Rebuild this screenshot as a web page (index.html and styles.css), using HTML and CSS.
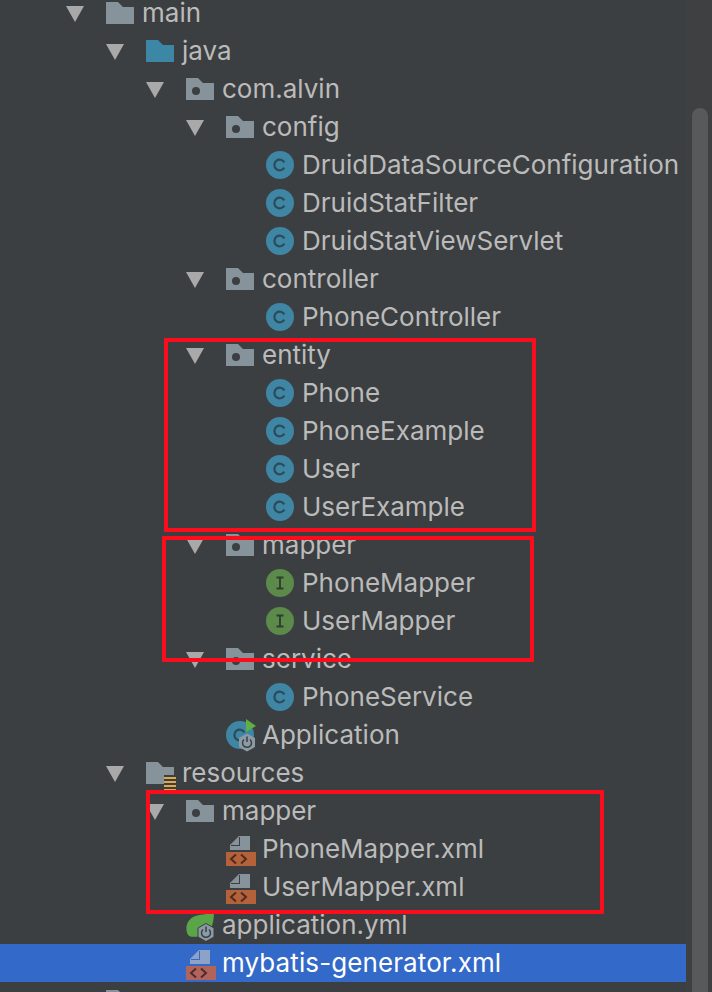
FILE: index.html
```html
<!DOCTYPE html>
<html lang="en">
<head>
<meta charset="utf-8">
<title>Project tree</title>
<link rel="stylesheet" href="styles.css">
</head>
<body>
<svg class="defs" width="0" height="0" aria-hidden="true">
  <symbol id="tri" viewBox="0 0 18 16"><path d="M0 0H18L9 16Z"/></symbol>
  <symbol id="folder" viewBox="0 0 28 22"><path d="M0 0H12L17 5H28V22H0Z"/></symbol>
  <symbol id="pkg" viewBox="0 0 28 22"><path fill="#87939a" d="M0 0H12L17 5H28V22H0Z"/><circle cx="10" cy="13" r="4" fill="#3c3f41"/></symbol>
  <symbol id="cls" viewBox="0 0 28 28"><circle cx="14" cy="14" r="14" fill="#3f86a5"/><path d="M18.300 11.400A5.300 5.300 0 1 0 18.300 16.600" fill="none" stroke="#2b4b5b" stroke-width="2.200"/></symbol>
  <symbol id="ifc" viewBox="0 0 28 28"><circle cx="14" cy="14" r="14" fill="#5b8a4a"/><path d="M10.500 8.500H17.500M14 8.500V19.500M10.500 19.500H17.500" fill="none" stroke="#2f3f2c" stroke-width="1.900"/></symbol>
  <symbol id="xml" viewBox="0 0 30 30"><path fill="#87939a" d="M4 9 13 0H24V14H4Z"/><path fill="#3c3f41" d="M13 1V9H5V10H14V1Z"/><rect y="16" width="30" height="14" fill="#b5613a"/><path d="M10 18.500 5 23 10 27.500M15 18.500 20 23 15 27.500" fill="none" stroke="#4c2c22" stroke-width="2"/></symbol>
  <symbol id="xmlsel" viewBox="0 0 30 30"><path fill="#8da2c4" d="M4 9 13 0H24V14H4Z"/><path fill="#3369c8" d="M13 1V9H5V10H14V1Z"/><rect y="16" width="30" height="14" fill="#b2645a"/><path d="M10 18.500 5 23 10 27.500M15 18.500 20 23 15 27.500" fill="none" stroke="#4c2c32" stroke-width="2"/></symbol>
</svg>

<div class="window">
  <div class="tree">
    <div class="row l0 first"><svg class="tw"><use href="#tri"/></svg><svg class="folder"><use href="#folder"/></svg><span class="name">main</span></div>
    <div class="row l1"><svg class="tw"><use href="#tri"/></svg><svg class="folder src"><use href="#folder"/></svg><span class="name">java</span></div>
    <div class="row l2"><svg class="tw"><use href="#tri"/></svg><svg class="folder"><use href="#pkg"/></svg><span class="name">com.alvin</span></div>
    <div class="row l3"><svg class="tw"><use href="#tri"/></svg><svg class="folder"><use href="#pkg"/></svg><span class="name">config</span></div>
    <div class="row l4 leaf"><svg class="ic"><use href="#cls"/></svg><span class="name">DruidDataSourceConfiguration</span></div>
    <div class="row l4 leaf"><svg class="ic"><use href="#cls"/></svg><span class="name">DruidStatFilter</span></div>
    <div class="row l4 leaf"><svg class="ic"><use href="#cls"/></svg><span class="name">DruidStatViewServlet</span></div>
    <div class="row l3"><svg class="tw"><use href="#tri"/></svg><svg class="folder"><use href="#pkg"/></svg><span class="name">controller</span></div>
    <div class="row l4 leaf"><svg class="ic"><use href="#cls"/></svg><span class="name">PhoneController</span></div>
    <div class="row l3"><svg class="tw"><use href="#tri"/></svg><svg class="folder"><use href="#pkg"/></svg><span class="name">entity</span></div>
    <div class="row l4 leaf"><svg class="ic"><use href="#cls"/></svg><span class="name">Phone</span></div>
    <div class="row l4 leaf"><svg class="ic"><use href="#cls"/></svg><span class="name">PhoneExample</span></div>
    <div class="row l4 leaf"><svg class="ic"><use href="#cls"/></svg><span class="name">User</span></div>
    <div class="row l4 leaf"><svg class="ic"><use href="#cls"/></svg><span class="name">UserExample</span></div>
    <div class="row l3"><svg class="tw"><use href="#tri"/></svg><svg class="folder"><use href="#pkg"/></svg><span class="name">mapper</span></div>
    <div class="row l4 leaf"><svg class="ic"><use href="#ifc"/></svg><span class="name">PhoneMapper</span></div>
    <div class="row l4 leaf"><svg class="ic"><use href="#ifc"/></svg><span class="name">UserMapper</span></div>
    <div class="row l3"><svg class="tw"><use href="#tri"/></svg><svg class="folder"><use href="#pkg"/></svg><span class="name">service</span></div>
    <div class="row l4 leaf"><svg class="ic"><use href="#cls"/></svg><span class="name">PhoneService</span></div>
    <div class="row l3 leaf">
      <svg class="ic" viewBox="0 0 28 28">
        <circle cx="14" cy="14" r="14" fill="#3f86a5"/>
        <path d="M18.300 11.400A5.300 5.300 0 1 0 18.300 16.600" fill="none" stroke="#2b4b5b" stroke-width="2.200"/>
        <path d="M20 -2 30 5 20 11Z" fill="#5fae46"/>
        <path d="M21 12.500 29 17V26L21 30.500 13 26V17Z" fill="#8a9ba6"/>
        <path d="M18 18.500A4.500 4.500 0 1 0 24 18.500M21 15.500V21" fill="none" stroke="#3c3f41" stroke-width="1.500"/>
      </svg>
      <span class="name">Application</span>
    </div>
    <div class="row l1">
      <svg class="tw"><use href="#tri"/></svg>
      <svg class="folder" viewBox="0 0 28 22">
        <path fill="#87939a" d="M0 0H12L17 5H28V13H18V22H0Z"/>
        <path fill="#e0a84c" d="M18 15H30V17H18ZM18 19H30V21H18ZM18 23H30V25H18ZM18 27H30V29H18Z"/>
      </svg>
      <span class="name">resources</span>
    </div>
    <div class="row l2"><svg class="tw"><use href="#tri"/></svg><svg class="folder"><use href="#pkg"/></svg><span class="name">mapper</span></div>
    <div class="row l3 leaf"><svg class="xml"><use href="#xml"/></svg><span class="name">PhoneMapper.xml</span></div>
    <div class="row l3 leaf"><svg class="xml"><use href="#xml"/></svg><span class="name">UserMapper.xml</span></div>
    <div class="row l2 leaf">
      <svg class="ic" viewBox="0 0 28 28">
        <path d="M28 0C28 12 26 22 14 25 8 26.500 4 26 2 24 -1 18 0 10 7 6 13 3 22 4 28 0Z" fill="#5aa548"/>
        <path d="M20 12.500 28 17V26L20 30.500 12 26V17Z" fill="#8a9ba6" stroke="#3c3f41" stroke-width="1"/>
        <path d="M17 18.500A4.500 4.500 0 1 0 23 18.500M20 15.500V21" fill="none" stroke="#3c3f41" stroke-width="1.500"/>
      </svg>
      <span class="name">application.yml</span>
    </div>
    <div class="row l2 leaf selected"><svg class="xml"><use href="#xmlsel"/></svg><span class="name">mybatis-generator.xml</span></div>
    <div class="row l0 tail"><svg class="tw"></svg><svg class="folder"><use href="#folder"/></svg></div>
  </div>
  <div class="gutter"><div class="thumb"></div></div>
  <div class="mark m1"></div>
  <div class="mark m2"></div>
  <div class="mark m3"></div>
</div>
</body>
</html>
```

FILE: styles.css
```css
* { box-sizing: border-box; }
html, body { margin: 0; padding: 0; height: 100%; overflow: hidden; background: #3c3f41; }
.defs { position: absolute; }
.window { position: relative; display: flex; width: 712px; height: 992px; overflow: hidden; font-family: Inter, "Liberation Sans", sans-serif; }
.tree { width: 686px; flex: none; }
.row { display: flex; align-items: center; height: 38px; color: #bbbbbb; font-size: 26px; white-space: nowrap; }
.row.first { height: 26px; margin-bottom: 6px; }
.l0 { padding-left: 66px; }
.l1 { padding-left: 106px; }
.l2 { padding-left: 146px; }
.l3 { padding-left: 186px; }
.l4 { padding-left: 226px; }
.l2.leaf { padding-left: 186px; }
.l3.leaf { padding-left: 226px; }
.l4.leaf { padding-left: 266px; }
.tw { width: 18px; height: 16px; margin-right: 22px; fill: #a9a9a9; flex: none; margin-top: 1px; }
.folder { width: 28px; height: 22px; margin-right: 8px; fill: #87939a; flex: none; overflow: visible; margin-top: -1px; }
.folder.src { fill: #3d87a6; }
.ic { width: 28px; height: 28px; margin-right: 8px; flex: none; overflow: visible; }
.xml { width: 30px; height: 30px; margin-right: 6px; margin-top: 4px; flex: none; }
.name { line-height: 26px; }
.selected { background: #3369c8; color: #ffffff; letter-spacing: 0.1px; }
.gutter { flex: 1; padding: 108px 4px 0 6px; background: #3e4042; }
.thumb { height: 900px; background: #58595b; border-radius: 8px 8px 0 0; }
.mark { position: absolute; border: 4px solid #fb0d1c; border-radius: 1px; }
.m1 { left: 164px; top: 338px; width: 372px; height: 194px; }
.m2 { left: 162px; top: 536px; width: 372px; height: 126px; }
.m3 { left: 146px; top: 790px; width: 458px; height: 124px; }
```
